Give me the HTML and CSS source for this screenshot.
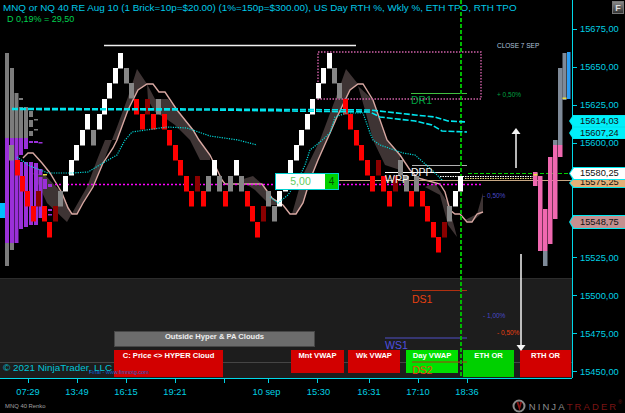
FILE: index.html
```html
<!DOCTYPE html>
<html lang="en">

<head>
  <title>MNQ 40 Renko</title>
  <meta charset="UTF-8">
  <link rel="stylesheet" href="styles.css">
</head>

<body>

<div class="workspace">
  <div class="chart-row">
    <div class="plot">
      <div class="upper">
        <div class="title">MNQ or NQ 40 RE Aug 10 (1 Brick=10p=$20.00) (1%=150p=$300.00), US Day RTH %, Wkly %, ETH TPO, RTH TPO</div>
        <div class="subtitle">D 0,19% = 29,50</div>
      </div>

      <div class="lower">
        <div class="btn btn-gray">Outside Hyper &amp; PA Clouds</div>
        <div class="btn-row">
          <div class="btn btn-red btn-cloud">C: Price &lt;&gt; HYPER Cloud</div>
          <div class="btn btn-red btn-short btn-mnt">Mnt VWAP</div>
          <div class="btn btn-red btn-short btn-wk">Wk VWAP</div>
          <div class="btn btn-lime btn-short btn-day">Day VWAP</div>
          <div class="btn btn-green btn-eth">ETH OR</div>
          <div class="btn btn-red btn-rth">RTH OR</div>
        </div>
        <div class="copyright">© 2021 NinjaTrader, LLC</div>
        <div class="trial">Final - www.fimnotg.com</div>
      </div>

      <svg class="overlay" width="572" height="378" viewBox="0 0 572 378">
        <!-- clouds -->
        <g class="cloud">
          <polygon points="33,173 45,175 62,193 72,214 77,214 93,187 103,163 117,127 128,97 137,69 147,84 138,90 128,110 117,140 105,140 97,160 87,187 67,222 47,203"/>
          <polygon points="147,84 155,99 168,99 177,110 193,130 199,140 210,155 210,160 200,160 190,140 175,125 165,118 155,112 148,100"/>
          <polygon points="240,180 253,176 262,184 272,198 283,205 270,205 255,190"/>
          <polygon points="292,214 303,175 320,140 335,100 346,69 358,84 350,90 337,117 330,133 318,160 310,180 303,203 296,214"/>
          <polygon points="358,86 373,100 387,140 400,155 400,170 385,165 373,140 365,110"/>
          <polygon points="425,187 435,183 448,203 457,237 448,225 440,195"/>
          <polygon points="465,220 477,214 483,193 483,212 472,222"/>
        </g>
        <polyline class="pink-line" points="23,158 28,153 33,153 42,163 50,173 62,193 68,208 72,214 77,214 83,203 93,187 103,163 113,148 117,140 128,110 138,90 147,84 153,84 159,92 165,92 177,110 193,130 199,140 210,155 222,180 225,184 262,184 272,198 283,205 290,214 296,214 303,203 310,180 318,160 330,133 337,117 350,90 358,84 363,84 373,100 387,140 400,155 410,170 418,178 440,184 445,192 450,210 455,214 460,214 467,222 472,222 477,214 483,212"/>

        <!-- level lines -->
        <line class="white-line" x1="104" y1="45.5" x2="356" y2="45.5"/>
        <rect class="range-box" x="318" y="52" width="163" height="47"/>
        <line class="magenta-line" x1="55" y1="184.5" x2="483" y2="184.5"/>
        <line class="tan-line" x1="339" y1="180.5" x2="572" y2="180.5"/>
        <line class="level-dr" x1="411" y1="93.5" x2="467" y2="93.5"/>
        <line class="level-gray" x1="412" y1="165.5" x2="467" y2="165.5"/>
        <line class="level-white" x1="385" y1="172.5" x2="460" y2="172.5"/>
        <line class="dots-white" x1="440" y1="176.5" x2="535" y2="176.5"/>
        <line class="dots-yellow" x1="465" y1="178.5" x2="535" y2="178.5"/>
        <line class="level-ds" x1="412" y1="290.5" x2="467" y2="290.5"/>
        <line class="level-ws" x1="385" y1="338" x2="467" y2="338"/>
        <line class="level-ds" x1="412" y1="362" x2="467" y2="362"/>
        <line class="green-dash" x1="468" y1="173.5" x2="568" y2="173.5"/>
        <line class="green-vert" x1="461" y1="0" x2="461" y2="376"/>

        <!-- left profile -->
        <g class="profile-gray">
          <rect x="5" y="53" width="4" height="85"/>
          <rect x="5" y="243" width="4" height="23"/>
          <rect x="10" y="68" width="4" height="70"/>
          <rect x="10" y="243" width="4" height="7"/>
          <rect x="14.5" y="93" width="4" height="45"/>
          <rect x="19" y="98" width="4" height="2"/>
          <rect x="19" y="107" width="4" height="31"/>
          <rect x="24" y="107" width="4" height="31"/>
          <rect x="29" y="111" width="4" height="6"/>
          <rect x="29" y="120" width="4" height="7"/>
          <rect x="29" y="131" width="4" height="5"/>
          <rect x="34" y="119" width="4" height="1.5"/>
          <rect x="34" y="129" width="4" height="1.5"/>
        </g>
        <g class="profile-purple">
          <rect x="5" y="138" width="4" height="105"/>
          <rect x="10" y="138" width="4" height="105"/>
          <rect x="14.5" y="138" width="4" height="105"/>
          <rect x="19" y="138" width="4" height="17"/>
          <rect x="19" y="162" width="4" height="67"/>
          <rect x="24" y="138" width="4" height="11"/>
          <rect x="24" y="162" width="4" height="65"/>
          <rect x="29" y="141" width="4" height="2"/>
          <rect x="29" y="162" width="4" height="63"/>
          <rect x="34" y="141" width="4" height="2"/>
          <rect x="34" y="163" width="4" height="62"/>
          <rect x="38.5" y="142" width="4" height="1.5"/>
          <rect x="38.5" y="169" width="4" height="6"/>
          <rect x="38.5" y="177" width="4" height="41"/>
          <rect x="43" y="179" width="4" height="10"/>
          <rect x="48" y="184" width="4" height="3"/>
          <rect x="48" y="209" width="4" height="2"/>
          <rect x="48" y="214" width="4" height="1.5"/>
        </g>
        <rect class="yellow" x="43" y="174" width="4" height="1.5"/>
        <rect class="bid-block" x="0" y="203" width="5" height="15"/>

        <!-- bricks -->
        <g class="bricks white">
          <rect x="118" y="53"/><rect x="113" y="68"/><rect x="107" y="83"/><rect x="102" y="99"/>
          <rect x="97" y="114"/><rect x="85" y="114"/><rect x="80" y="130"/><rect x="74" y="145"/>
          <rect x="69" y="160"/><rect x="63" y="176"/><rect x="212" y="160"/><rect x="234" y="160"/>
          <rect x="277" y="191"/><rect x="283" y="176"/><rect x="288" y="160"/><rect x="294" y="145"/>
          <rect x="299" y="130"/><rect x="305" y="114"/><rect x="310" y="99"/><rect x="316" y="83"/>
          <rect x="321" y="68"/><rect x="327" y="53"/><rect x="453" y="191"/><rect x="458" y="176"/>
        </g>
        <g class="bricks gray">
          <rect x="124" y="68"/><rect x="129" y="83"/><rect x="156" y="99"/><rect x="91" y="130"/>
          <rect x="58" y="191"/><rect x="9" y="145"/><rect x="206" y="176"/><rect x="217" y="176"/>
          <rect x="228" y="176"/><rect x="239" y="176"/><rect x="266" y="191"/><rect x="272" y="206"/>
          <rect x="332" y="68"/><rect x="337" y="83"/><rect x="398" y="160"/><rect x="404" y="176"/>
          <rect x="414" y="176"/><rect x="447" y="206"/>
        </g>
        <g class="bricks red">
          <rect x="134" y="99"/><rect x="140" y="114"/><rect x="151" y="114"/><rect x="162" y="114"/>
          <rect x="167" y="130"/><rect x="173" y="145"/><rect x="178" y="160"/><rect x="184" y="176"/>
          <rect x="189" y="191"/><rect x="201" y="191"/><rect x="223" y="191"/><rect x="245" y="191"/>
          <rect x="250" y="206"/><rect x="255" y="222"/><rect x="15" y="160"/><rect x="20" y="176"/>
          <rect x="25" y="191"/><rect x="31" y="206"/><rect x="42" y="206"/><rect x="47" y="222"/>
          <rect x="343" y="99"/><rect x="348" y="114"/><rect x="354" y="130"/><rect x="359" y="145"/>
          <rect x="365" y="160"/><rect x="370" y="176"/><rect x="381" y="176"/><rect x="387" y="191"/>
          <rect x="409" y="191"/><rect x="420" y="191"/><rect x="425" y="206"/><rect x="431" y="222"/>
          <rect x="436" y="237"/>
        </g>
        <g class="bricks dark-red">
          <rect x="145" y="99"/><rect x="36" y="191"/><rect x="53" y="206"/><rect x="195" y="176"/>
          <rect x="261" y="206"/><rect x="376" y="160"/><rect x="393" y="176"/><rect x="442" y="222"/>
        </g>

        <!-- averages -->
        <polyline class="teal-dots" points="17,157 30,166 48,173 72,173 88,172 103,163 117,155 125,140 127,138 132,132 167,127 187,128 210,136 238,140 257,145"/>
        <polyline class="teal-dots" points="270,197 278,203 288,195 298,180 305,165 310,150 320,142 330,133 335,117 347,113 363,113 370,133 373,140 380,145 403,153 415,155 432,170 442,180"/>
        <polyline class="cyan-dash" points="12,108.5 210,109 370,110 415,115 435,117 448,121 467,122"/>
        <polyline class="cyan-dash" points="12,109.5 210,110 370,112 380,117 415,121 432,125 442,131 467,132"/>

        <!-- right profile -->
        <g class="profile-steel">
          <rect x="558" y="68" width="4.5" height="72"/>
          <rect x="562.5" y="53" width="4" height="47"/>
          <rect x="543" y="251" width="4.5" height="15"/>
          <rect x="553" y="140" width="4.5" height="5"/>
          <rect x="558" y="140" width="4.5" height="5"/>
        </g>
        <rect class="blue-bar" x="567" y="52" width="3.5" height="47"/>
        <rect class="yellow" x="562.5" y="97.5" width="4" height="1.5"/>
        <g class="profile-pink">
          <rect x="533" y="172" width="4.5" height="14"/>
          <rect x="538" y="176" width="4.5" height="75"/>
          <rect x="543" y="209" width="4.5" height="42"/>
          <rect x="548" y="157" width="4.5" height="87"/>
          <rect x="553" y="145" width="4.5" height="74"/>
          <rect x="558" y="145" width="4.5" height="12"/>
        </g>
        <rect class="yellow" x="533.5" y="174" width="4" height="1.5"/>

        <!-- arrows -->
        <line class="arrow" x1="516" y1="132" x2="516" y2="168"/>
        <polygon class="arrow-head" points="516,128 520.5,134 511.5,134"/>
        <line class="arrow" x1="521" y1="254" x2="521" y2="347"/>
        <polygon class="arrow-head" points="521,351 516.5,345 525.500,345"/>

        <!-- level names -->
        <text class="tag tag-dr" x="411" y="104">DR1</text>
        <text class="tag tag-white" x="411" y="176">DPP</text>
        <text class="tag tag-white" x="385" y="183">WPP</text>
        <text class="tag tag-ds" x="412" y="303">DS1</text>
        <text class="tag tag-ws" x="385" y="349">WS1</text>
        <text class="tag tag-ds" x="412" y="374">DS2</text>

        <!-- small notes -->
        <text class="note note-close" x="497" y="47.500">CLOSE 7 SEP</text>
        <text class="note note-green" x="497" y="96.500">+ 0,50%</text>
        <text class="note note-blue" x="483" y="197.500">- 0,50%</text>
        <text class="note note-blue" x="483" y="317.500">- 1,00%</text>
        <text class="note note-orange" x="497" y="334.500">- 0,50%</text>
      </svg>

      <div class="qty-box">
        <div class="qty-value">5,00</div>
        <div class="qty-count">4</div>
      </div>
    </div>

    <div class="price-axis">
      <div class="f-btn">F</div>
      <div class="price"><span class="tick"></span>15675,00</div>
      <div class="price"><span class="tick"></span>15650,00</div>
      <div class="price"><span class="tick"></span>15625,00</div>
      <div class="price"><span class="tick"></span>15600,00</div>
      <div class="price"><span class="tick"></span>15575,00</div>
      <div class="price"><span class="tick"></span>15550,00</div>
      <div class="price"><span class="tick"></span>15525,00</div>
      <div class="price"><span class="tick"></span>15500,00</div>
      <div class="price"><span class="tick"></span>15475,00</div>
      <div class="price"><span class="tick"></span>15450,00</div>

      <div class="marker marker-cyan m-614"><span>15614,03</span></div>
      <div class="marker marker-cyan m-607"><span>15607,24</span></div>
      <div class="marker marker-tan m-575"><span>15575,25</span></div>
      <div class="marker marker-white m-580"><span>15580,25</span></div>
      <div class="marker marker-rose m-548"><span>15548,75</span></div>
    </div>
  </div>

  <div class="time-axis">
    <div class="time">07:29</div>
    <div class="time">13:49</div>
    <div class="time">16:15</div>
    <div class="time">19:21</div>
    <div class="time time-blank"></div>
    <div class="time time-sep">10 sep</div>
    <div class="time time-after-sep">15:30</div>
    <div class="time">16:31</div>
    <div class="time">17:10</div>
    <div class="time">18:36</div>
  </div>

  <div class="footer">
    <div class="series">MNQ 40 Renko</div>
    <div class="logo">
      <svg class="logo-mark" width="14" height="14" viewBox="0 0 14 14">
        <circle class="logo-ring" cx="7" cy="7" r="5.500"/>
        <path class="logo-v" d="M4.500 3 L7.500 12 L10 3 L8 3 L7.500 7 L6.500 3 Z"/>
      </svg>
      <span class="logo-ninja">NINJA</span><span class="logo-trader">TRADER</span><span class="logo-reg">®</span>
    </div>
  </div>
</div>

</body>

</html>
```

FILE: styles.css
```css
* {
  box-sizing: border-box;
}

body {
  margin: 0;
  width: 625px;
  height: 413px;
  overflow: hidden;
  background: #000;
  font-family: "Liberation Sans", Arial, sans-serif;
}

.workspace {
  display: flex;
  flex-direction: column;
  height: 413px;
}

.chart-row {
  display: flex;
  height: 378px;
}

.plot {
  position: relative;
  width: 572px;
}

.upper {
  height: 278px;
  padding: 2px 3px;
}

.title {
  font-size: 9.85px;
  line-height: 12px;
  color: #00c8e8;
  white-space: nowrap;
}

.subtitle {
  padding-left: 4px;
  font-size: 9px;
  line-height: 11px;
  color: #00d050;
}

.lower {
  position: relative;
  display: flex;
  flex-direction: column;
  justify-content: flex-end;
  height: 100px;
  padding: 0 0 1px 114px;
  background: #1d1d1d;
  border-top: 1px solid #2c2c2c;
}

.lower::before {
  content: "";
  position: absolute;
  left: 0;
  right: 0;
  top: 83px;
  height: 1px;
  background: #454545;
}

.btn {
  position: relative;
  padding-top: 1px;
  font-size: 7.6px;
  font-weight: bold;
  line-height: 9px;
  color: #fff;
  text-align: center;
  white-space: nowrap;
}

.btn-gray {
  width: 201px;
  height: 16px;
  margin-bottom: 3px;
  padding-top: 0;
  background: #6c6c6c;
  border: 1px solid #474747;
  color: #eee;
}

.btn-row {
  display: flex;
  align-items: flex-start;
  height: 27px;
}

.btn-red {
  background: #d20000;
}

.btn-lime {
  background: #00e000;
}

.btn-green {
  background: #00d000;
}

.btn-cloud {
  width: 109px;
  height: 27px;
  padding-top: 1px;
}

.btn-short {
  height: 23px;
}

.btn-eth,
.btn-rth {
  height: 27px;
}

.btn-mnt {
  width: 53px;
  margin-left: 68px;
}

.btn-wk {
  width: 52px;
  margin-left: 4px;
}

.btn-day {
  width: 52px;
  margin-left: 6px;
}

.btn-eth {
  width: 51px;
  margin-left: 5px;
}

.btn-rth {
  width: 51px;
  margin-left: 6px;
}

.copyright {
  position: absolute;
  left: 3px;
  top: 82px;
  font-size: 9.9px;
  line-height: 13px;
  color: #00c4d8;
  white-space: nowrap;
}

.trial {
  position: absolute;
  left: 89px;
  top: 89px;
  font-size: 5.5px;
  line-height: 8px;
  color: #1060d0;
  white-space: nowrap;
}

.overlay {
  position: absolute;
  left: 0;
  top: 0;
}

.cloud polygon {
  fill: #3e3434;
}

.pink-line {
  fill: none;
  stroke: #d8a8a2;
  stroke-width: 1.4;
}

.white-line {
  stroke: #f0f0f0;
  stroke-width: 1.5;
}

.range-box {
  fill: none;
  stroke: #d060a8;
  stroke-width: 1.4;
  stroke-dasharray: 1.5 1.5;
}

.magenta-line {
  stroke: #ff00ff;
  stroke-width: 1.6;
  stroke-dasharray: 2 2;
}

.tan-line {
  stroke: #c8a884;
}

.level-dr {
  stroke: #40c040;
}

.level-gray {
  stroke: #b0b0b0;
}

.level-white {
  stroke: #fff;
}

.dots-white {
  stroke: #fff;
  stroke-dasharray: 1.5 1;
}

.dots-yellow {
  stroke: #e8e080;
  stroke-dasharray: 1.5 1;
}

.level-ds {
  stroke: #b03010;
}

.level-ws {
  stroke: #5050c8;
}

.green-dash {
  stroke: #00d000;
  stroke-dasharray: 4 2;
}

.green-vert {
  stroke: #00b800;
  stroke-width: 2;
  stroke-dasharray: 4 2;
}

.profile-gray rect {
  fill: #7c7c7c;
}

.profile-purple rect {
  fill: #9a30d8;
}

.profile-steel rect {
  fill: #7e8a98;
}

.profile-pink rect {
  fill: #f068b0;
}

.blue-bar {
  fill: #2a9df4;
}

.yellow {
  fill: #e8e040;
}

.bid-block {
  fill: #00bfff;
}

.bricks rect {
  width: 5px;
  height: 15.5px;
}

.white rect {
  fill: #fff;
}

.gray rect {
  fill: #868686;
}

.red rect {
  fill: #ff0000;
}

.dark-red rect {
  fill: #8b0000;
}

.teal-dots {
  fill: none;
  stroke: #00d8d8;
  stroke-width: 1.2;
  stroke-dasharray: 1.2 1.2;
}

.cyan-dash {
  fill: none;
  stroke: #00e5ee;
  stroke-width: 1.6;
  stroke-dasharray: 6 2;
}

.arrow {
  stroke: #f4f4f4;
  stroke-width: 1.5;
}

.arrow-head {
  fill: #f4f4f4;
}

.tag {
  font-size: 10.5px;
}

.tag-dr {
  fill: #00a040;
}

.tag-white {
  fill: #f4f4f4;
}

.tag-ds {
  fill: #e84010;
}

.tag-ws {
  fill: #5050e0;
}

.note {
  font-size: 6.5px;
}

.note-close {
  fill: #b0c4de;
}

.note-green {
  fill: #00a040;
}

.note-blue {
  fill: #4848c8;
}

.note-orange {
  fill: #e84010;
}

.qty-box {
  position: absolute;
  left: 275px;
  top: 173px;
  display: flex;
  width: 64px;
  height: 17px;
  background: #fff;
  border: 1px solid #00d0d0;
}

.qty-value {
  flex: 1;
  font-size: 10.5px;
  line-height: 15px;
  color: #60cc60;
  text-align: center;
}

.qty-count {
  width: 13px;
  font-size: 10px;
  line-height: 15px;
  color: #005000;
  text-align: center;
  background: #00d000;
}

.price-axis {
  position: relative;
  width: 53px;
  padding-top: 10px;
  border-left: 1px solid #00d8e8;
}

.price {
  display: flex;
  align-items: center;
  gap: 3px;
  height: 38.1px;
  font-size: 9.3px;
  color: #00d0e4;
}

.tick {
  width: 4px;
  height: 1px;
  background: #00d0e4;
}

.f-btn {
  position: absolute;
  right: 1px;
  top: 1px;
  width: 12px;
  height: 13px;
  font-size: 9px;
  font-weight: bold;
  line-height: 12px;
  color: #ddd;
  text-align: center;
  background: linear-gradient(#888, #333);
  border: 1px solid #777;
}

.marker {
  position: absolute;
  left: -4px;
  right: 0;
  padding: 1px 0 1px 1px;
  background: #00e8f0;
  clip-path: polygon(0 50%, 4px 0, 100% 0, 100% 100%, 4px 100%);
}

.marker span {
  display: block;
  height: 100%;
  padding-left: 10px;
  font-size: 9.3px;
  line-height: 10px;
  color: #101010;
  clip-path: polygon(0 50%, 4px 0, 100% 0, 100% 100%, 4px 100%);
}

.marker-cyan span {
  background: #00f0fa;
}

.marker-white span {
  background: #fff;
}

.marker-tan span {
  background: #e4b078;
}

.marker-rose span {
  background: #c49090;
}

.m-614 {
  top: 115px;
  height: 12px;
}

.m-607 {
  top: 127px;
  height: 12px;
}

.m-580 {
  top: 167px;
  height: 13px;
}

.m-575 {
  top: 178px;
  height: 10px;
}

.m-575 span {
  line-height: 6px;
}

.m-548 {
  top: 215px;
  height: 14px;
}

.m-548 span {
  line-height: 12px;
}

.m-580 span {
  line-height: 11px;
}

.time-axis {
  display: flex;
  height: 21px;
  width: 572px;
  padding-left: 3.500px;
  border-top: 1px solid #00d8e8;
}

.time {
  position: relative;
  width: 49px;
  padding-top: 7px;
  font-size: 9.3px;
  line-height: 12px;
  color: #00d0e4;
  text-align: center;
}

.time::before {
  content: "";
  position: absolute;
  left: 24px;
  top: 0;
  width: 1px;
  height: 4px;
  background: #00d0e4;
}

.time-blank {
  width: 44px;
}

.time-sep {
  width: 46px;
}

.time-after-sep {
  width: 52px;
  margin-left: 3px;
}

.footer {
  display: flex;
  justify-content: space-between;
  align-items: center;
  flex: 1;
  padding: 0 3px 0 5px;
}

.series {
  font-size: 5.9px;
  color: #a0a0a0;
}

.logo {
  display: flex;
  align-items: center;
  font-size: 9.500px;
  letter-spacing: 2.100px;
}

.logo-mark {
  margin-right: 3px;
}

.logo-ring {
  fill: none;
  stroke: #8a8a8a;
  stroke-width: 2;
}

.logo-v {
  fill: #8a1414;
}

.logo-ninja {
  color: #8c8c8c;
}

.logo-trader {
  color: #7a1414;
}

.logo-reg {
  font-size: 5px;
  letter-spacing: 0;
  color: #7a1414;
  align-self: flex-start;
}
```
